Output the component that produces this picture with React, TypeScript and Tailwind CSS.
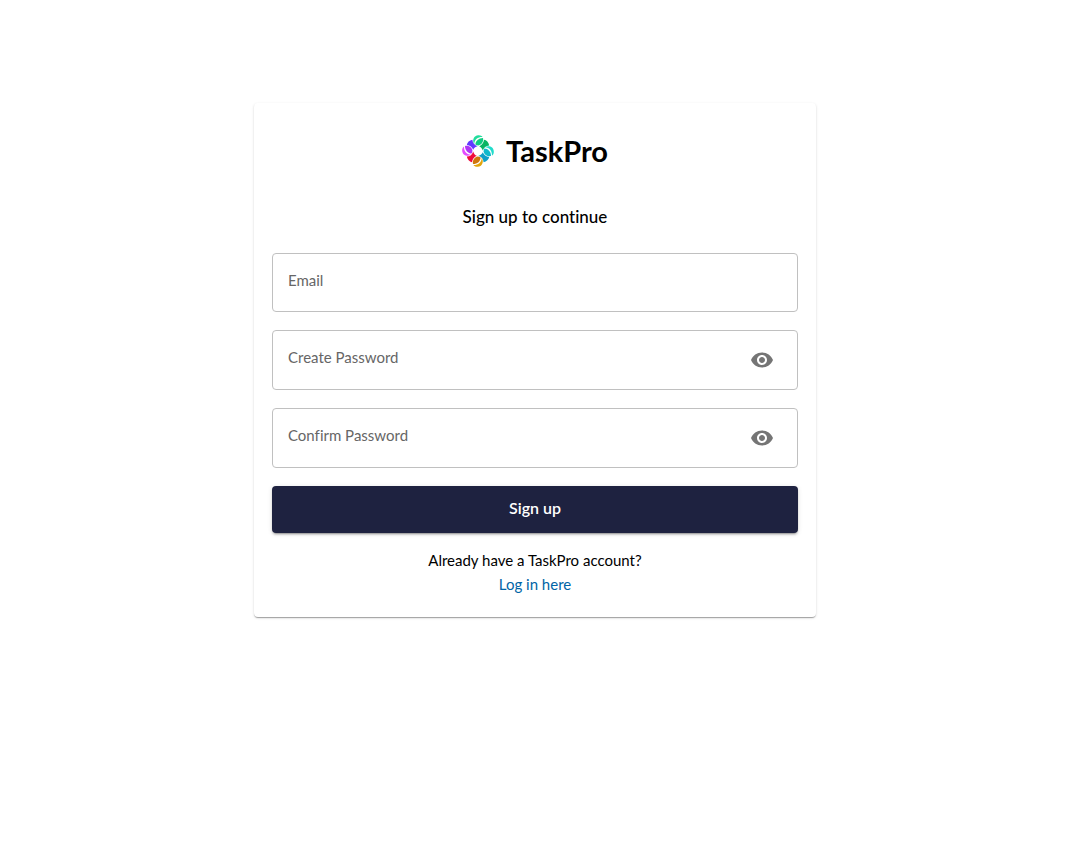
import { useState } from "react";

const quarters = [
  { angle: 0, outer: "#22dd9c", inner: "#0fcb80", blade: "#08b563" },
  { angle: 90, outer: "#22dccb", inner: "#10b9cc", blade: "#109fc8" },
  { angle: 180, outer: "#e2a50c", inner: "#cf760c", blade: "#f00a3c" },
  { angle: 270, outer: "#e44bff", inner: "#ae35f5", blade: "#6238ff" },
];

function Logo() {
  return (
    <svg viewBox="0 0 32 32" className="size-8" aria-hidden="true">
      {quarters.map((q) => (
        <path
          key={q.angle}
          transform={`rotate(${q.angle} 16 16)`}
          d="M17.2 11.2 C19.8 10.2 21.6 8 22 4.8 C24.6 5.2 26.6 7.4 27.2 10.4 C24 10.6 21.6 12.6 20.8 15.6 C20.2 13.4 19 12 17.2 11.2 Z"
          fill={q.blade}
        />
      ))}
      {quarters.map((q) => (
        <g key={q.angle} transform={`rotate(${q.angle} 16 16)`}>
          <path d="M12.2 9 C9.8 5 12 0.4 16.2 0.2 C18.2 0 19.8 0.8 20.6 2 C16 1.8 12.6 4.4 12.2 9 Z" fill={q.outer} />
          <path d="M13.4 9.6 C13.4 6 16.6 3 21 3 C21.8 6.4 19.6 9.8 16.4 10.4 C15.2 10.4 14.2 10.2 13.4 9.6 Z" fill={q.inner} />
        </g>
      ))}
    </svg>
  );
}

function EyeIcon() {
  return (
    <svg viewBox="0 0 24 24" className="size-6 fill-[#757575]" aria-hidden="true">
      <path d="M12 4.5C7 4.5 2.73 7.61 1 12c1.73 4.39 6 7.5 11 7.5s9.27-3.11 11-7.5c-1.73-4.39-6-7.5-11-7.5M12 17c-2.76 0-5-2.24-5-5s2.24-5 5-5 5 2.24 5 5-2.24 5-5 5m0-8c-1.66 0-3 1.34-3 3s1.34 3 3 3 3-1.34 3-3-1.34-3-3-3" />
    </svg>
  );
}

type FieldProps = { id: string; label: string; password?: boolean };

function Field({ id, label, password = false }: FieldProps) {
  const [visible, setVisible] = useState(false);
  return (
    <div
      className={`relative flex items-center rounded border border-[#c0c0c0] pr-[15px] focus-within:border-[#1e2240] ${password ? "h-[60px]" : "h-[59px]"}`}
    >
      <input
        id={id}
        type={password ? (visible ? "text" : "password") : "email"}
        placeholder=" "
        className="peer h-full min-w-0 flex-1 bg-transparent px-[15px] outline-none"
      />
      <label
        htmlFor={id}
        className="pointer-events-none absolute left-[15px] top-[14px] bg-white text-[15px] leading-6 text-[#666666] peer-focus:-top-3 peer-[:not(:placeholder-shown)]:-top-3"
      >
        {label}
      </label>
      {password && (
        <button
          type="button"
          aria-label="Toggle password visibility"
          onClick={() => setVisible(!visible)}
          className="rounded-full p-2"
        >
          <EyeIcon />
        </button>
      )}
    </div>
  );
}

export default function App() {
  return (
    <main className="min-h-screen bg-white pl-[18px] pr-4 pt-[103px] font-['Lato','Open_Sans',sans-serif] text-[15px] leading-6 text-black [font-variant-ligatures:none]">
      <section className="mx-auto w-full max-w-[562px] rounded bg-white px-[18px] pb-[21px] pt-7 text-center shadow-[0_2px_1px_-1px_rgba(0,0,0,0.2),0_1px_1px_0_rgba(0,0,0,0.14),0_1px_3px_0_rgba(0,0,0,0.12)]">
        <div className="flex items-center justify-center gap-3">
          <Logo />
          <h1 className="text-[29px] font-bold leading-10">TaskPro</h1>
        </div>
        <h2 className="mt-[34px] text-[17px] font-medium leading-6">Sign up to continue</h2>
        <form className="mt-6 flex flex-col gap-[18px] text-left" onSubmit={(e) => e.preventDefault()}>
          <Field id="email" label="Email" />
          <Field id="password" label="Create Password" password />
          <Field id="confirm" label="Confirm Password" password />
          <button
            type="submit"
            className="h-[47px] rounded bg-[#1e2240] pb-[3px] text-[16px] font-semibold text-white shadow-[0_3px_1px_-2px_rgba(0,0,0,0.2),0_2px_2px_0_rgba(0,0,0,0.14),0_1px_5px_0_rgba(0,0,0,0.12)]"
          >
            Sign up
          </button>
        </form>
        <p className="mt-[15px]">Already have a TaskPro account?</p>
        <a href="#login" className="text-[#0064a6]">Log in here</a>
      </section>
    </main>
  );
}
